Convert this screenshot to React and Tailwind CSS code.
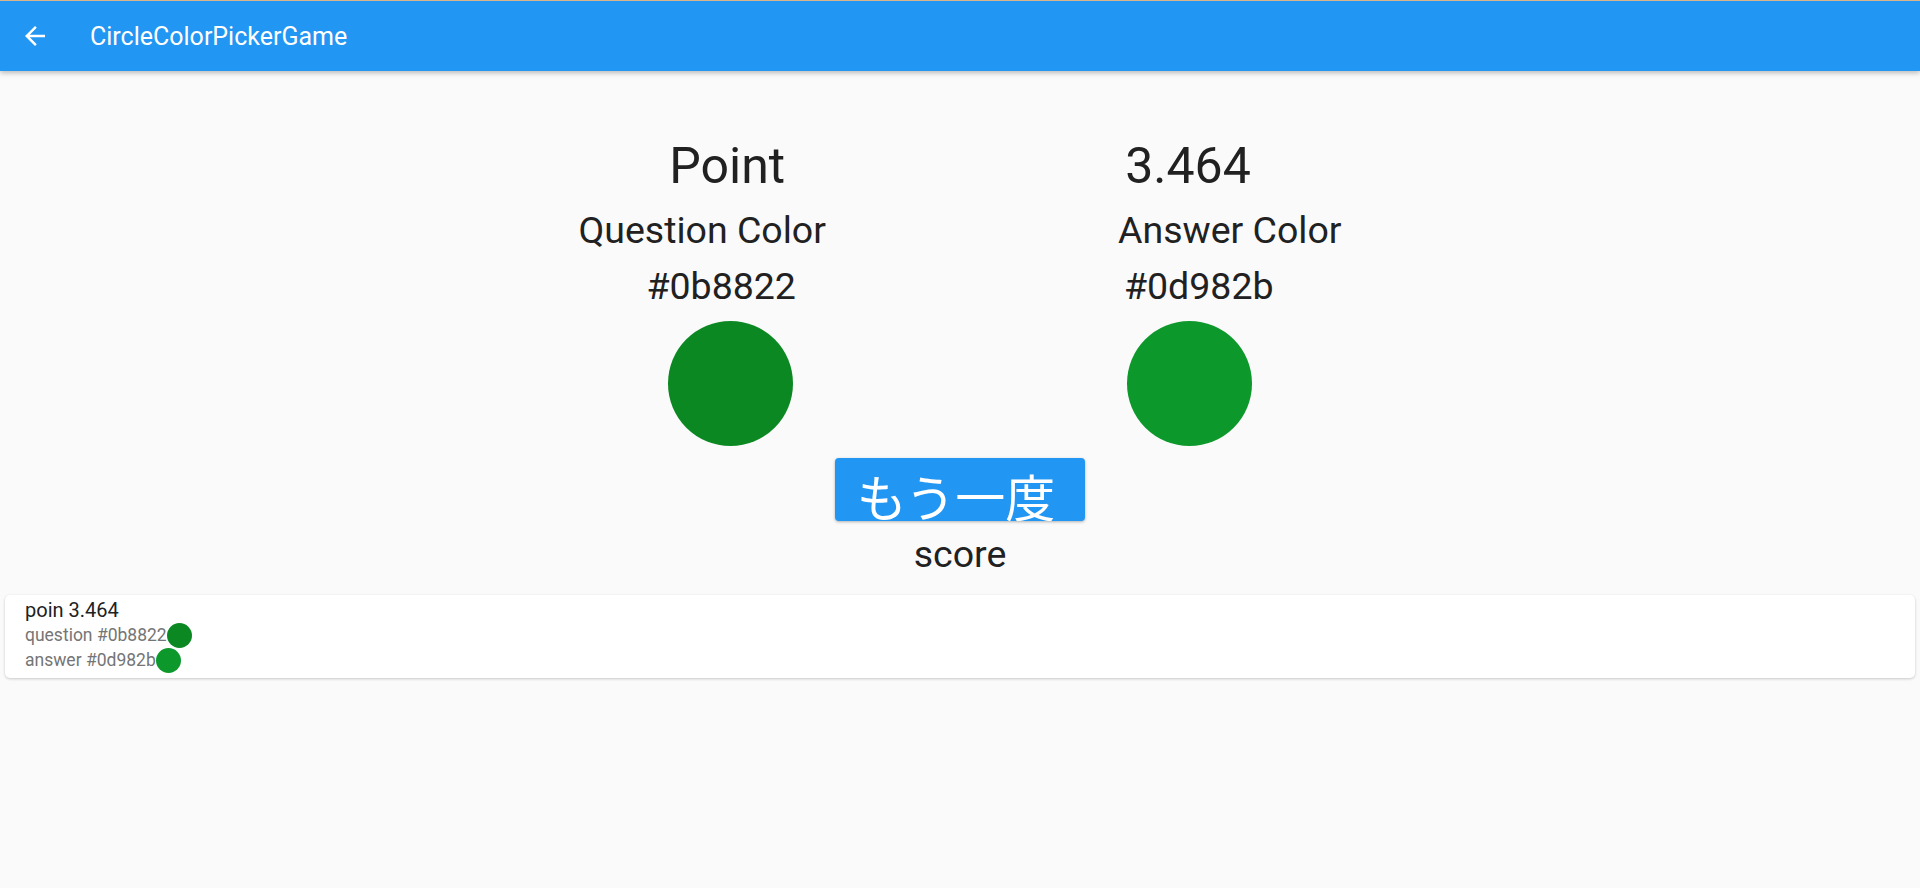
import React from 'react';

const font = { fontFamily: 'Roboto, "Noto Sans CJK JP", sans-serif' };

const ColorDot = ({ color, size }) => (
  <div className="rounded-full shrink-0" style={{ backgroundColor: color, width: size, height: size }} />
);

const App = () => {
  const question = '#0b8822';
  const answer = '#0d982b';
  const point = '3.464';

  return (
    <div className="min-h-[888px] bg-[#fafafa] text-[#212121]" style={font}>
      {/* App bar */}
      <header className="relative z-10 h-[71px] border-t border-[#d9b48c] bg-[#2196f3] shadow-[0_2px_5px_rgba(0,0,0,0.26)] flex items-center">
        <button className="ml-5 w-[30px] h-[30px] flex items-center justify-center text-white">
          <svg viewBox="0 0 24 24" className="w-[30px] h-[30px]" fill="currentColor">
            <path d="M20 11H7.83l5.59-5.59L12 4l-8 8 8 8 1.41-1.41L7.83 13H20v-2z" />
          </svg>
        </button>
        <h1 className="ml-10 text-[25px] font-normal text-white leading-none">CircleColorPickerGame</h1>
      </header>

      {/* Result */}
      <main className="flex flex-col items-center">
        <div className="mt-[66px] flex justify-center gap-[340px] text-[50px] leading-[59px]">
          <span>Point</span>
          <span>{point}</span>
        </div>
        <div className="mt-[12px] flex justify-center gap-[292px] text-[37.5px] leading-[44px]">
          <span>Question Color</span>
          <span>Answer Color</span>
        </div>
        <div className="mt-[12px] flex justify-center gap-[328px] text-[37.5px] leading-[44px]">
          <span>{question}</span>
          <span>{answer}</span>
        </div>
        <div className="mt-[13px] flex justify-center gap-[334px]">
          <ColorDot color={question} size={125} />
          <ColorDot color={answer} size={125} />
        </div>
        <button className="mt-[12px] w-[250px] h-[63px] rounded-[4px] bg-[#2196f3] text-white shadow-[0_1px_3px_rgba(0,0,0,0.3)] overflow-hidden flex justify-center pr-[8px]">
          <span className="text-[50px] leading-[63px] pt-[6px] whitespace-nowrap" style={{ fontFamily: '"Noto Sans CJK JP", sans-serif' }}>もう一度</span>
        </button>
        <div className="mt-[11px] text-[37.5px] leading-[44px]">score</div>
      </main>

      {/* History */}
      <div className="mx-[5px] mt-[19px] rounded-[5px] bg-white shadow-[0_1px_3px_rgba(0,0,0,0.2)] px-5 pt-[3px] pb-[5px]">
        <div className="text-[20px] leading-[25px] text-[#212121]">poin {point}</div>
        <div className="flex items-center h-[25px] text-[17.5px] text-[#757575]">
          <span>question {question}</span>
          <ColorDot color={question} size={25} />
        </div>
        <div className="flex items-center h-[25px] text-[17.5px] text-[#757575]">
          <span>answer {answer}</span>
          <ColorDot color={answer} size={25} />
        </div>
      </div>
    </div>
  );
};

export default App;
